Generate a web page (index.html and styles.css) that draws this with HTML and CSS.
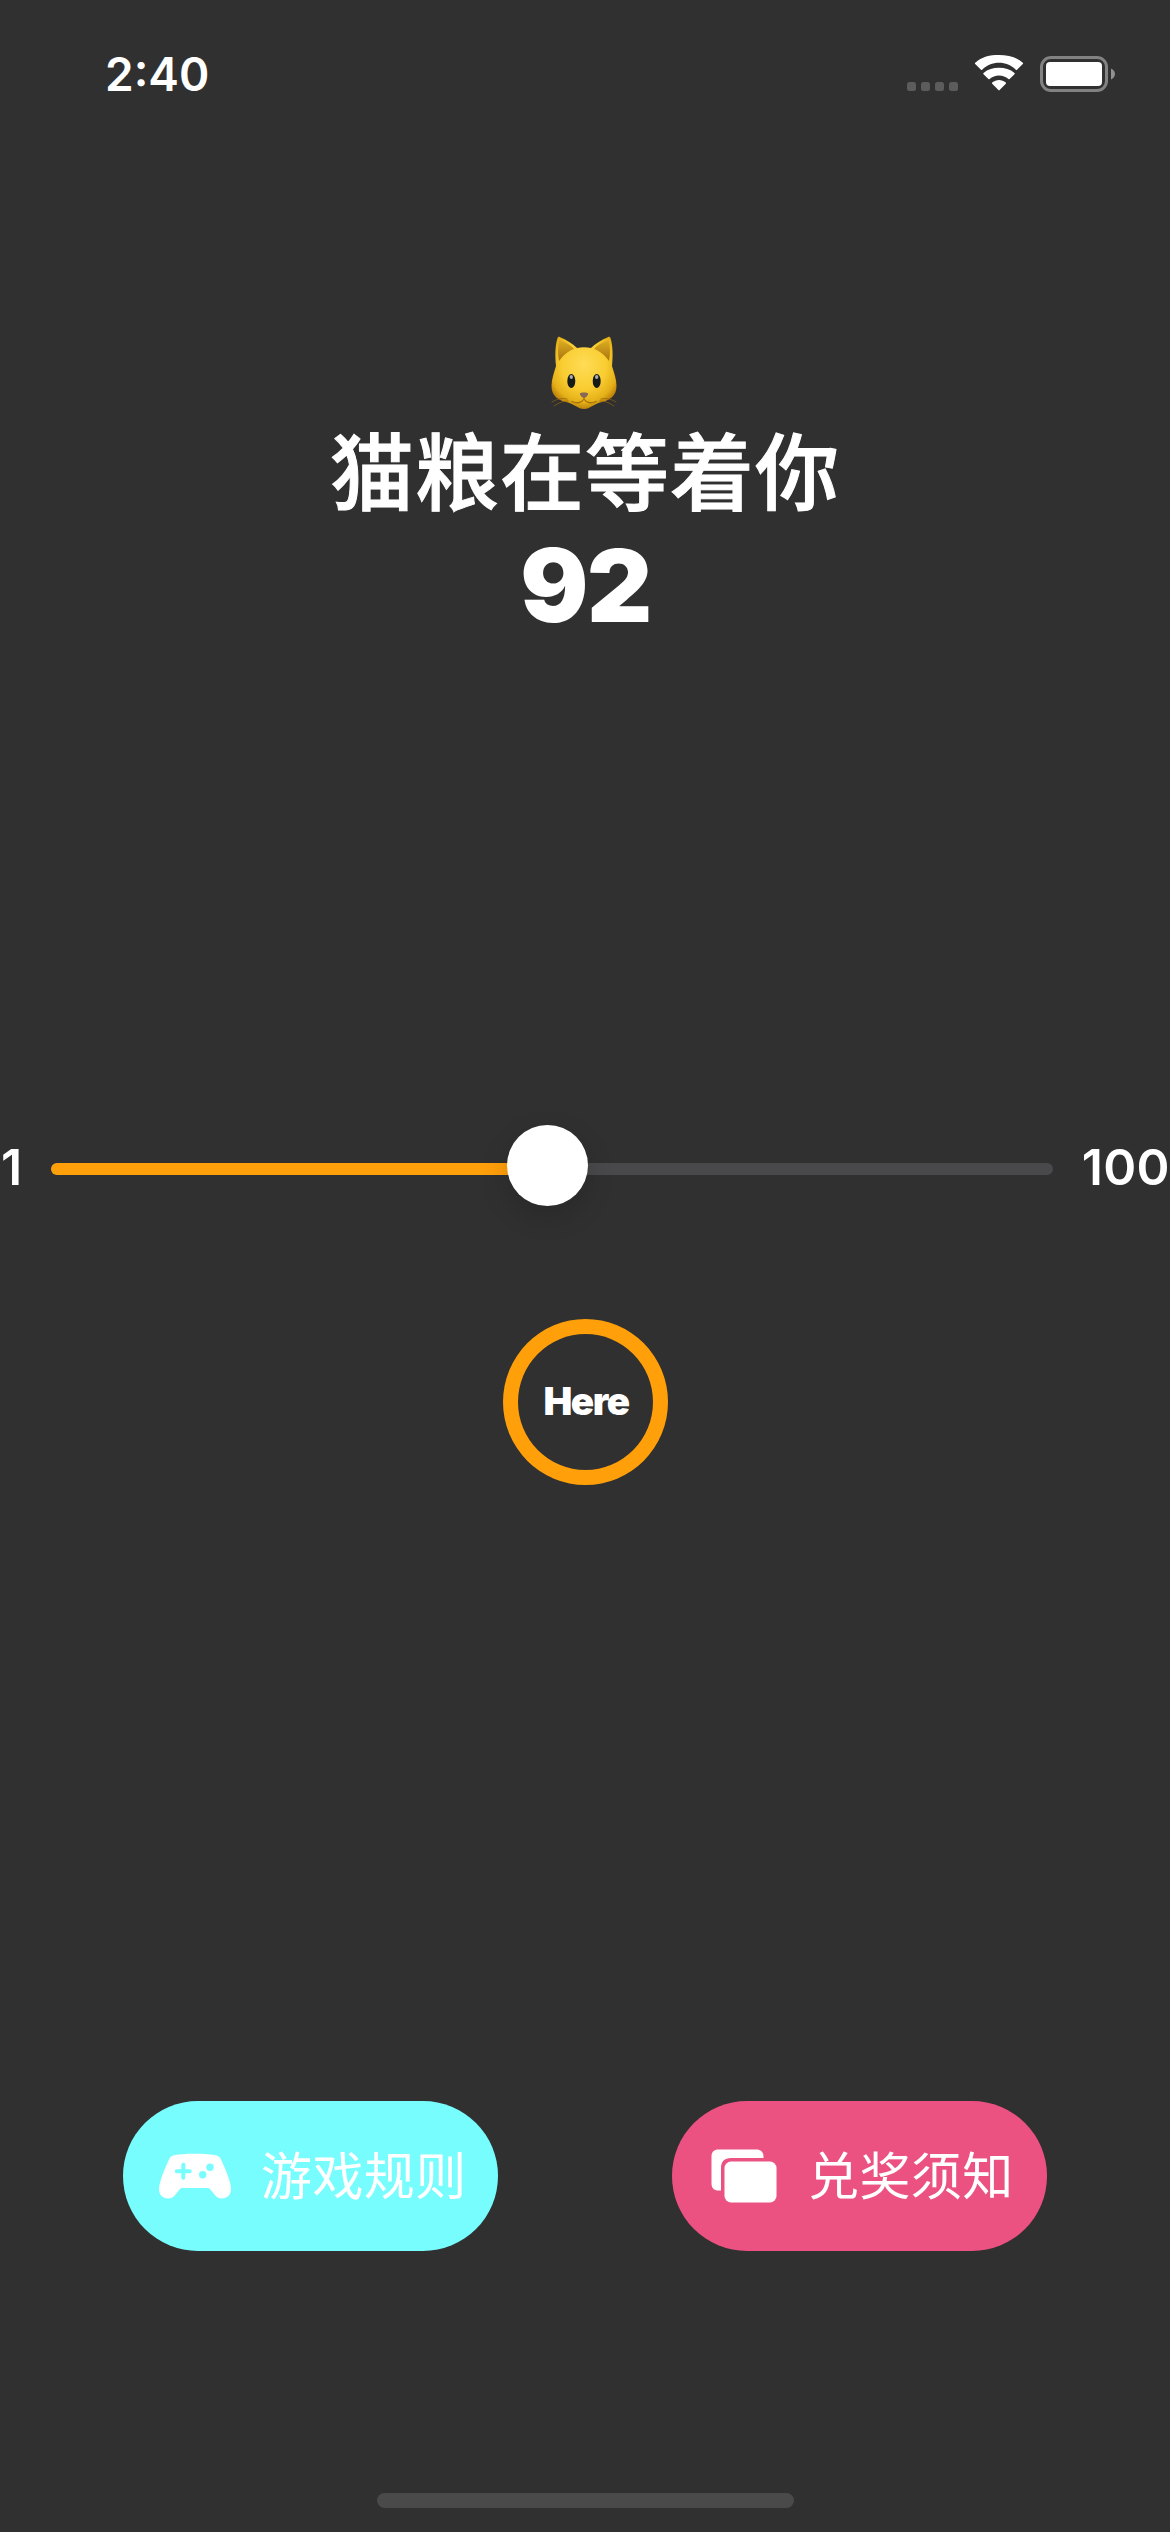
FILE: index.html
```html
<!DOCTYPE html>
<html lang="zh-CN">
<head>
<meta charset="utf-8">
<meta name="viewport" content="width=device-width">
<title>猫粮在等着你</title>
<link rel="stylesheet" href="styles.css">
</head>
<body>
<div class="screen">
  <header class="status-bar">
    <span class="time">2:40</span>
    <svg class="status-icons" width="210" height="38" viewBox="0 0 210 38">
      <g fill="#5c5c5c">
        <rect x="2" y="28" width="9" height="9" rx="2.500"/>
        <rect x="16" y="28" width="9" height="9" rx="2.500"/>
        <rect x="30" y="28" width="9" height="9" rx="2.500"/>
        <rect x="44" y="28" width="9" height="9" rx="2.500"/>
      </g>
      <g fill="#fff">
        <path transform="translate(1 0)" d="M93 8.800c6.400 0 12.300 2.500 16.800 6.900.4.300.9.300 1.200 0l5.800-5.600c.4-.4.4-.9 0-1.300C110.400 2.700 102.100 1 93 1S75.600 2.700 69.200 8.800c-.4.4-.4.900 0 1.300l5.800 5.600c.3.300.8.300 1.200 0C80.700 11.300 86.600 8.800 93 8.800z"/>
        <path transform="translate(1 0)" d="M93 21.400c3.500 0 6.900 1.300 9.400 3.700.4.300.9.300 1.200 0l4.900-4.900c.4-.4.4-.9 0-1.300C104.300 15.300 98.800 13.700 93 13.700s-11.300 1.600-15.500 5.200c-.4.400-.4.900 0 1.300l4.900 4.900c.3.300.8.300 1.200 0 2.500-2.400 5.900-3.700 9.400-3.700z"/>
        <path transform="translate(1 0)" d="M99.800 29.800c.4-.4.400-1 0-1.300-4-3.400-9.600-3.400-13.600 0-.4.300-.4.900 0 1.300l6.200 6.300c.3.400.9.400 1.200 0z"/>
        <rect x="141" y="8" width="56" height="24" rx="4"/>
      </g>
      <rect x="136.500" y="3.500" width="65" height="33" rx="9.500" fill="none" stroke="#828282" stroke-width="3"/>
      <path d="M206 14.500c2.400 1 4 3.100 4 5.500s-1.600 4.500-4 5.500z" fill="#909090"/>
    </svg>
  </header>

  <main class="game">
    <section class="target">
      <svg class="cat" width="74" height="80" viewBox="0 0 74 80">
        <defs>
          <radialGradient id="fur" cx=".5" cy=".38" r=".62">
            <stop offset="0" stop-color="#ffdc55"/>
            <stop offset=".55" stop-color="#f9cd32"/>
            <stop offset=".85" stop-color="#e5b018"/>
            <stop offset="1" stop-color="#bd820c"/>
          </radialGradient>
          <linearGradient id="ear" x1="0" y1="0" x2="0" y2="1">
            <stop offset="0" stop-color="#dcae21"/>
            <stop offset="1" stop-color="#a9740d"/>
          </linearGradient>
        </defs>
        <path d="M9 32C8 22 8 12 10.500 4c.4-1.200 1.500-1.400 2.700-.8C20 6 26 10 30 14c4.500-1 9.500-1 14 0 4-4 10-8 16.800-10.800 1.200-.6 2.300-.4 2.700.8C66 12 66 22 65 32c2 7 4.500 13 4.500 20 0 10-6.500 14.500-16.500 16.500-6 1.500-10 6.500-16 6.500S27 70 21 68.500C11 66.500 4.500 62 4.500 52c0-7 2.500-13 4.500-20z" fill="url(#fur)"/>
        <path d="M12 27C10.500 19 10.800 12 12.500 6 19 8.500 24 11 27 15c-6 2-11 6.500-15 12zM62 27c1.500-8 1.200-15-.5-21C55 8.500 50 11 47 15c6 2 11 6.500 15 12z" fill="url(#ear)"/>
        <g fill="none" stroke="#8c6011" stroke-width=".9" stroke-linecap="round" opacity=".8">
          <path d="M20 65c-6-1-10 0-15 3M21 67c-6 0-9 2-14 5M54 65c6-1 10 0 15 3M53 67c6 0 9 2 14 5"/>
        </g>
        <g fill="none" stroke="#a8740d" stroke-width="1.300" stroke-linecap="round">
          <path d="M25 67.500c5 2.500 10 1 12-2.500 2 3.500 7 5 12 2.500M37 62v3"/>
        </g>
        <ellipse cx="24.300" cy="47" rx="4" ry="7" fill="#151917"/>
        <ellipse cx="49.700" cy="47" rx="4" ry="7" fill="#151917"/>
        <ellipse cx="24.300" cy="43" rx="1.700" ry="2" fill="#a9adad"/>
        <ellipse cx="49.700" cy="43" rx="1.700" ry="2" fill="#a9adad"/>
        <path d="M33 59.500c1-1.400 7-1.400 8 0 .8 1.500-2.600 4.500-4 4.500s-4.800-3-4-4.500z" fill="#876756"/>
      </svg>
      <h1 class="title">猫粮在等着你</h1>
      <p class="number">92</p>
    </section>

    <section class="slider">
      <span class="bound min">1</span>
      <div class="track">
        <div class="fill"></div>
        <div class="knob"></div>
      </div>
      <span class="bound max">100</span>
    </section>

    <button class="here">Here</button>
  </main>

  <nav class="actions">
    <button class="pill rules">
      <svg width="72" height="46" viewBox="0 0 72 46">
        <path d="M14 2.500C22 0 50 0 58 2.500c2 .7 3.200 2.300 4 4C66 15 72 29 72 36c0 6-4 9.500-9 9.500-3.500 0-5.500-1.500-7.500-4L51 36c-.8-.9-1.500-1-3-1H24c-1.500 0-2.200.1-3 1l-4.500 5.500c-2 2.500-4 4-7.500 4-5 0-9-3.500-9-9.500C0 29 6 15 10 6.500c.8-1.700 2-3.300 4-4z" fill="#fff"/>
        <path d="M24.300 11.800v13M17.800 18.300h13" stroke="#78fdff" stroke-width="4" stroke-linecap="round"/>
        <circle cx="51" cy="14.200" r="3.700" fill="#78fdff"/>
        <circle cx="43.700" cy="21.800" r="3.700" fill="#78fdff"/>
      </svg>
      <span class="label">游戏规则</span>
    </button>
    <button class="pill prizes">
      <svg width="66" height="54" viewBox="0 0 66 54">
        <path d="M7.500.5h38c4 0 7 2.500 7 7V9H20C13.500 9 10 12.500 10 19v22.500H7.500c-4.500 0-7-2.500-7-7v-27c0-4.500 2.500-7 7-7z" fill="#fff"/>
        <rect x="13.500" y="12.500" width="52" height="41" rx="6.500" fill="#fff"/>
      </svg>
      <span class="label">兑奖须知</span>
    </button>
  </nav>
  <div class="home-indicator"></div>
</div>
</body>
</html>
```
FILE: styles.css
```css
* {
  box-sizing: border-box;
}

body {
  margin: 0;
  background: #303030;
  color: #fff;
  font-family: Inter, "Noto Sans CJK SC", sans-serif;
}

h1,
p {
  margin: 0;
}

button {
  border: 0;
  padding: 0;
  color: inherit;
  font-family: inherit;
}

svg {
  display: block;
  flex: none;
}

.screen {
  height: 2532px;
  display: flex;
  flex-direction: column;
  overflow: hidden;
}

.status-bar {
  height: 141px;
  padding: 54px 55px 0 105px;
  display: flex;
  justify-content: space-between;
  align-items: flex-start;
}

.time {
  font-size: 46px;
  line-height: 40px;
  font-weight: 570;
  letter-spacing: 0;
}

.game {
  height: 1960px;
  display: flex;
  flex-direction: column;
  align-items: center;
}

.target {
  height: 978px;
  padding-top: 193px;
  display: flex;
  flex-direction: column;
  align-items: center;
}

.cat {
  margin-right: 2px;
}

.title {
  margin-top: 10px;
  font-size: 84px;
  line-height: 100px;
  font-weight: 500;
  letter-spacing: 1px;
  -webkit-text-stroke: 1px #fff;
}

.number {
  margin-top: 11px;
  padding-left: 1px;
  font-size: 101px;
  line-height: 100px;
  font-weight: 900;
  letter-spacing: -1.5px;
}

.slider {
  width: 100%;
  height: 100px;
  display: flex;
  align-items: center;
}

.bound {
  flex: none;
  padding-bottom: 4px;
  font-size: 50px;
  line-height: 60px;
  font-weight: 560;
}

.min {
  width: 51px;
  padding-left: 1px;
}

.max {
  width: 117px;
  text-align: right;
  letter-spacing: 0.4px;
}

.track {
  position: relative;
  flex: none;
  width: 1002px;
  height: 12px;
  border-radius: 6px;
  background: #49494b;
}

.fill {
  width: 496px;
  height: 12px;
  border-radius: 6px;
  background: #ff9f0a;
}

.knob {
  position: absolute;
  left: 456px;
  top: -38px;
  width: 81px;
  height: 81px;
  border-radius: 50%;
  background: #fff;
  box-shadow: 0 10px 28px rgba(0, 0, 0, 0.16);
}

.here {
  margin-top: 100px;
  width: 165px;
  height: 166px;
  padding: 0 0 2px 2px;
  border: 15px solid #ff9f0a;
  border-radius: 50%;
  background: none;
  font-size: 38.5px;
  font-weight: 900;
  letter-spacing: -1.5px;
}

.actions {
  padding: 0 123px;
  display: flex;
  justify-content: space-between;
}

.pill {
  width: 375px;
  height: 150px;
  border-radius: 75px;
  display: flex;
  align-items: center;
}

.label {
  padding-top: 2px;
  font-size: 51px;
  line-height: 60px;
  font-weight: 400;
  letter-spacing: 0.4px;
}

.rules {
  padding-left: 36px;
  gap: 30px;
  background: #78fdff;
}

.prizes {
  padding-left: 39px;
  gap: 31px;
  background: #ec5281;
}

.home-indicator {
  width: 417px;
  height: 15px;
  margin: 242px auto 0;
  border-radius: 8px;
  background: #4a4a4a;
}
```
